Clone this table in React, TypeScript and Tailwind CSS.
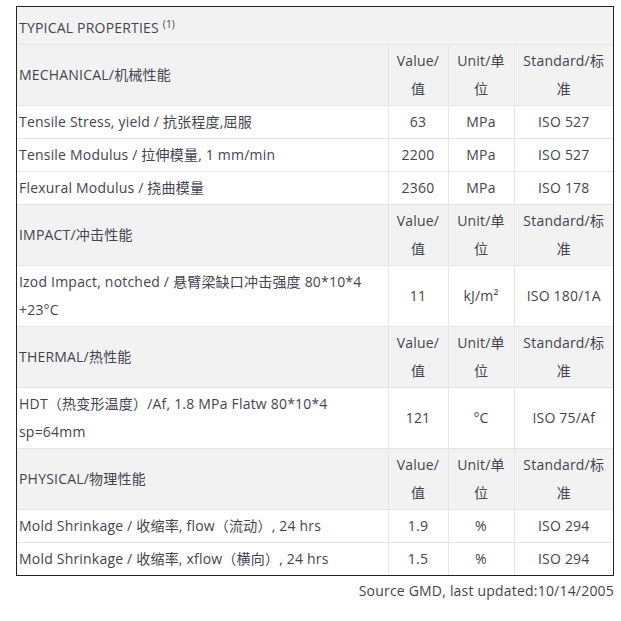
import { Fragment, type ReactNode } from "react";

const font = { fontFamily: '"Open Sans", "Noto Sans CJK SC", sans-serif' };

interface Row {
  label: ReactNode;
  value: string;
  unit: string;
  std: string;
}

interface Section {
  title: string;
  rows: Row[];
}

const sections: Section[] = [
  {
    title: "MECHANICAL/机械性能",
    rows: [
      { label: "Tensile Stress, yield / 抗张程度,屈服", value: "63", unit: "MPa", std: "ISO 527" },
      { label: "Tensile Modulus / 拉伸模量, 1 mm/min", value: "2200", unit: "MPa", std: "ISO 527" },
      { label: "Flexural Modulus / 挠曲模量", value: "2360", unit: "MPa", std: "ISO 178" },
    ],
  },
  {
    title: "IMPACT/冲击性能",
    rows: [
      {
        label: (
          <>
            Izod Impact, notched / 悬臂梁缺口冲击强度 80*10*4
            <br />
            +23°C
          </>
        ),
        value: "11",
        unit: "kJ/m²",
        std: "ISO 180/1A",
      },
    ],
  },
  {
    title: "THERMAL/热性能",
    rows: [
      {
        label: (
          <>
            HDT（热变形温度）/Af, 1.8 MPa Flatw 80*10*4
            <br />
            sp=64mm
          </>
        ),
        value: "121",
        unit: "°C",
        std: "ISO 75/Af",
      },
    ],
  },
  {
    title: "PHYSICAL/物理性能",
    rows: [
      { label: "Mold Shrinkage / 收缩率, flow（流动）, 24 hrs", value: "1.9", unit: "%", std: "ISO 294" },
      { label: "Mold Shrinkage / 收缩率, xflow（横向）, 24 hrs", value: "1.5", unit: "%", std: "ISO 294" },
    ],
  },
];

export default function App() {
  const cell = "border border-[#e6e6e6] px-[2px] py-[2px] align-middle";

  return (
    <main
      className="bg-white w-[621px] h-[621px] pt-[6px] pl-[16px] text-[14px] leading-[28px] tracking-[0.2px] text-[#444450]"
      style={font}
    >
      <div className="w-[598px] border border-[#222]">
        <table className="w-full table-fixed border-collapse [&_tr>td:first-child]:border-l-0 [&_tr>td:last-child]:border-r-0 [&_tr:first-child>td]:border-t-0 [&_tr:last-child>td]:border-b-0">
          <colgroup>
            <col className="w-[371px]" />
            <col className="w-[60px]" />
            <col className="w-[66px]" />
            <col className="w-[99px]" />
          </colgroup>
          <tbody>
            <tr className="bg-[#f2f2f2]">
              <td colSpan={4} className={`${cell} h-[37px] pt-[7px]`}>
                TYPICAL PROPERTIES <sup className="text-[10px]">(1)</sup>
              </td>
            </tr>
            {sections.map((s) => (
              <Fragment key={s.title}>
                <tr className="bg-[#f2f2f2]">
                  <td className={cell}>{s.title}</td>
                  <td className={`${cell} text-center`}>
                    Value/
                    <br />值
                  </td>
                  <td className={`${cell} text-center`}>
                    Unit/单
                    <br />位
                  </td>
                  <td className={`${cell} text-center`}>
                    Standard/标
                    <br />准
                  </td>
                </tr>
                {s.rows.map((r) => (
                  <tr key={r.value + r.std}>
                    <td className={cell}>{r.label}</td>
                    <td className={`${cell} text-center`}>{r.value}</td>
                    <td className={`${cell} text-center`}>{r.unit}</td>
                    <td className={`${cell} text-center`}>{r.std}</td>
                  </tr>
                ))}
              </Fragment>
            ))}
          </tbody>
        </table>
      </div>
      <p className="w-[598px] text-right mt-[1px]">Source GMD, last updated:10/14/2005</p>
    </main>
  );
}
